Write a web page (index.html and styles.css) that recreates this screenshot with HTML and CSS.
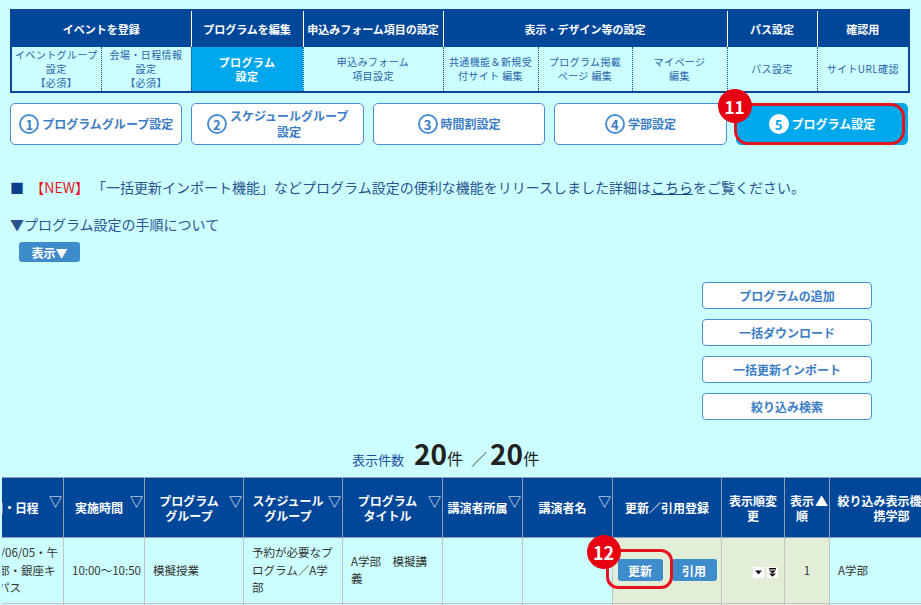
FILE: index.html
```html
<!DOCTYPE html>
<html lang="ja">
  <head>
    <meta charset="utf-8">
    <title>プログラム設定</title>
    <link rel="stylesheet" href="styles.css">
  </head>
  <body>
    <div class="page">
      <table class="gnav">
        <colgroup>
          <col class="g90"><col class="g90"><col class="g112"><col class="g140"><col class="g95"><col class="g94"><col class="g95"><col class="g90"><col class="g92">
        </colgroup>
        <tr class="gnav_head">
          <th colspan="2">イベントを登録</th>
          <th>プログラムを編集</th>
          <th>申込みフォーム項目の設定</th>
          <th colspan="3">表示・デザイン等の設定</th>
          <th>パス設定</th>
          <th>確認用</th>
        </tr>
        <tr class="gnav_sub">
          <td>イベントグループ<br>設定<br>【必須】</td>
          <td>会場・日程情報<br>設定<br>【必須】</td>
          <td class="on">プログラム<br>設定</td>
          <td>申込みフォーム<br>項目設定</td>
          <td>共通機能＆新規受<br>付サイト 編集</td>
          <td>プログラム掲載<br>ページ 編集</td>
          <td>マイページ<br>編集</td>
          <td>パス設定</td>
          <td>サイトURL確認</td>
        </tr>
      </table>

      <div class="steps">
        <a class="step"><span class="num">1</span><span>プログラムグループ設定</span></a>
        <a class="step"><span class="num">2</span><span class="txt">スケジュールグループ<br>設定</span></a>
        <a class="step"><span class="num">3</span><span>時間割設定</span></a>
        <a class="step"><span class="num">4</span><span>学部設定</span></a>
        <a class="step on"><span class="num">5</span><span>プログラム設定</span><span class="badge">11</span></a>
      </div>

      <p class="notice"><span class="sq">■</span>&nbsp;&nbsp;<span class="new">【NEW】</span>&nbsp;「一括更新インポート機能」などプログラム設定の便利な機能をリリースしました詳細は<a href="#">こちら</a>をご覧ください。</p>
      <p class="howto">▼プログラム設定の手順について</p>
      <button class="show">表示▼</button>

      <div class="tools">
        <button>プログラムの追加</button>
        <button>一括ダウンロード</button>
        <button>一括更新インポート</button>
        <button>絞り込み検索</button>
      </div>

      <div class="count">
        <span class="lbl">表示件数</span>
        <span class="big">20</span><span class="ken">件</span>
        <span class="sl">／</span>
        <span class="big">20</span><span class="ken">件</span>
      </div>
    </div>

    <div class="listwrap">
      <table class="list">
        <colgroup>
          <col class="l96"><col class="l81"><col class="l99"><col class="l99"><col class="l100"><col class="l80"><col class="l90"><col class="l109"><col class="l63"><col class="l45"><col class="l124">
        </colgroup>
        <thead>
          <tr>
            <th class="first">開催日・日程<span class="sort">▽</span></th>
            <th>実施時間<span class="sort">▽</span></th>
            <th>プログラム<br>グループ<span class="sort">▽</span></th>
            <th>スケジュール<br>グループ<span class="sort">▽</span></th>
            <th>プログラム<br>タイトル<span class="sort">▽</span></th>
            <th>講演者所属<span class="sort">▽</span></th>
            <th>講演者名<span class="sort">▽</span></th>
            <th class="plain">更新／引用登録</th>
            <th class="plain">表示順変更</th>
            <th class="wrap">表示順<span class="sort">▲</span></th>
            <th class="plain">絞り込み表示機能連携学部</th>
          </tr>
        </thead>
        <tbody>
          <tr>
            <td class="nw first">2023/06/05・午<br>前の部・銀座キ<br>ャンパス</td>
            <td class="nw">10:00〜10:50</td>
            <td>模擬授業</td>
            <td>予約が必要なプ<br>ログラム／A学<br>部</td>
            <td>A学部　模擬講<br>義</td>
            <td></td>
            <td></td>
            <td class="g opcell">
              <div class="ops">
                <span class="mark"><button class="btn">更新</button><span class="badge">12</span></span>
                <button class="btn">引用</button>
              </div>
            </td>
            <td class="g arrows">
              <svg width="11" height="11" viewBox="0 0 11 11"><rect width="11" height="11" fill="#fff"/><polygon points="2,3.5 9,3.5 5.5,7.5" fill="#111"/></svg>
              <svg width="11" height="11" viewBox="0 0 11 11"><rect width="11" height="11" fill="#fff"/><rect x="2" y="1" width="7" height="1.5" fill="#111"/><polygon points="2,3.5 9,3.5 5.5,6.5" fill="#111"/><polygon points="2,6.5 9,6.5 5.5,9.8" fill="#111"/></svg>
            </td>
            <td class="g num">1</td>
            <td>A学部</td>
          </tr>
          <tr>
            <td class="nw first">2023/06/05・午<br>前の部・銀座キ<br>ャンパス</td>
            <td class="nw">11:00〜11:50</td>
            <td>模擬授業</td>
            <td>予約が必要なプ<br>ログラム／B学<br>部</td>
            <td>B学部　模擬講<br>義</td>
            <td></td>
            <td></td>
            <td class="g"></td>
            <td class="g"></td>
            <td class="g num">2</td>
            <td>B学部</td>
          </tr>
        </tbody>
      </table>
    </div>
  </body>
</html>
```

FILE: styles.css
```css
* {
  margin: 0;
  padding: 0;
  box-sizing: border-box;
}
body {background-color: #ccffff; font-family: "Noto Sans CJK JP", "Noto Sans", sans-serif; color: #234f8c;}
.page {padding: 9px 13px 0 10px;}

/* top navigation */
.gnav {width: 898px; border-collapse: collapse; table-layout: fixed; border: 2px solid #0a4796;}
.g90 {width: 90px;} .g92 {width: 92px;} .g94 {width: 94px;} .g95 {width: 95px;} .g112 {width: 112px;} .g140 {width: 140px;}
.gnav_head th {height: 37px; background-color: #00479a; color: #fff; font-size: 11px; font-weight: bold; border-left: 1px solid #fff;}
.gnav_sub td {height: 45px; text-align: center; font-size: 10px; line-height: 14px; letter-spacing: .4px; color: #2a62aa; border-left: 1px dotted #0a4796;}
.gnav_sub td.on {background-color: #00a7ec; color: #fff; font-weight: bold; font-size: 11px;}

/* steps */
.steps {display: flex; gap: 9px; margin-top: 10px;}
.step {flex: 1; height: 42px; display: flex; align-items: center; justify-content: center; gap: 3px; position: relative; background-color: #fff; border: 1px solid #4a8fd4; border-radius: 5px; color: #3b7dc6; font-size: 12px; font-weight: bold; line-height: 16px; text-align: center;}
.step .num {width: 20px; height: 20px; border: 2px solid #4a8fd4; border-radius: 50%; display: flex; align-items: center; justify-content: center; font-size: 13px; line-height: 1;}
.step.on {background-color: #00a8ec; border-color: #00a8ec; color: #fff;}
.step.on .num {background-color: #fff; border-color: #fff; color: #00a8ec;}
.step.on::after {content: ""; position: absolute; top: -1px; left: -3px; right: 2px; bottom: -1px; border: 3px solid #e3141e; border-radius: 14px;}
.badge {position: absolute; width: 34px; height: 34px; border-radius: 50%; background-color: #e60012; color: #fff; font-size: 17px; font-weight: bold; display: flex; align-items: center; justify-content: center; z-index: 2; line-height: 1;}
.step .badge {left: -19px; top: -15px;}

/* notice */
.notice {margin-top: 32px; font-size: 14px; line-height: 20px; color: #2a5390;}
.notice .sq {color: #0b3f8e;}
.notice .new {color: #e8141c;}
.notice a {color: #1c4c8e;}
.howto {margin-top: 17px; font-size: 14px; line-height: 20px; color: #2a5390;}
.show {display: block; margin: 8px 0 0 9px; width: 61px; height: 20px; background-color: #3f8ccc; color: #fff; border: none; border-radius: 3px; font-family: inherit; font-size: 12px; font-weight: bold;}

.tools {display: flex; flex-direction: column; align-items: flex-end; gap: 10px; margin-top: 20px; padding-right: 36px;}
.tools button {width: 170px; height: 27px; background-color: #fff; border: 1px solid #4a90d8; border-radius: 4px; color: #3b7dc6; font-family: inherit; font-size: 12px; font-weight: bold;}

.count {display: flex; align-items: baseline; padding-left: 342px; margin-top: 13px; height: 44px; color: #222;}
.count .lbl {font-size: 13px; color: #1a4ea0; margin-right: 10px;}
.count .big {font-size: 28px; font-weight: bold;}
.count .ken {font-size: 16px;}
.count .sl {font-size: 16px; margin: 0 3px 0 8px; color: #444;}

/* list */
.listwrap {overflow: hidden; margin-left: 2px;}
.list {margin-left: -35px; width: 986px; border-collapse: collapse; table-layout: fixed;}
.l45 {width: 45px;} .l63 {width: 63px;} .l80 {width: 80px;} .l81 {width: 81px;} .l90 {width: 90px;} .l96 {width: 96px;} .l99 {width: 99px;} .l100 {width: 100px;} .l109 {width: 109px;} .l124 {width: 124px;}
.list th {position: relative; height: 60px; background-color: #00479a; color: #fff; font-size: 12px; font-weight: bold; line-height: 15px; padding: 0 14px 0 4px; border: 1px solid #8d9db9; text-align: center; white-space: nowrap;}
.list th.plain {padding: 0 6px; white-space: normal;}
.list th.wrap {white-space: normal;}
.list th.first {text-align: right; padding: 0 25px 0 0; letter-spacing: -.5px;}
.sort {position: absolute; top: 15px; right: 1px; font-size: 13px; font-weight: normal; letter-spacing: 0;}
.list td {height: 63px; background-color: #ccffff; border: 1px solid #c3c3c3; padding: 6px 8px; font-size: 11.5px; line-height: 17.5px; color: #333; vertical-align: middle;}
.list td.first {padding-left: 7px;}
.list td.nw {white-space: nowrap; overflow: hidden;}
.list td.g {background-color: #e3eed9;}
.list td.opcell {padding: 6px 0;}
.list td.num {text-align: center;}
.list td.arrows {text-align: right; padding: 14px 6px 0 0; font-size: 0;}
.arrows svg {margin-left: 3px;}
.ops {display: flex; justify-content: center; gap: 9px;}
.btn {width: 45px; height: 22px; background-color: #3f8ccc; color: #fff; border: none; border-radius: 3px; font-family: inherit; font-size: 12px; font-weight: bold;}
.mark {position: relative; display: block;}
.mark::after {content: ""; position: absolute; top: -10px; left: -12px; right: -10px; bottom: -8px; border: 3px solid #e3141e; border-radius: 12px;}
.mark .badge {left: -31px; top: -24px; font-size: 18px;}
```
